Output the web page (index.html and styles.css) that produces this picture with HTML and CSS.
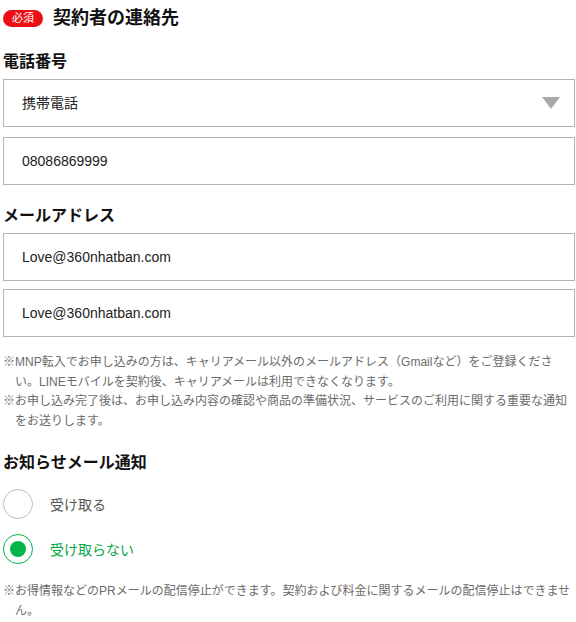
FILE: index.html
```html
<!DOCTYPE html>
<html lang="ja">
<head>
    <meta charset="UTF-8">
    <meta name="viewport" content="width=device-width, initial-scale=1.0">
    <title>契約者の連絡先</title>
    <link rel="stylesheet" href="styles.css">
</head>
<body>

    <div class="form">
        <div class="section-title">
            <span class="badge">必須</span>
            <h1>契約者の連絡先</h1>
        </div>

        <h2 class="label label-phone">電話番号</h2>
        <div class="select-wrap">
            <select class="field">
                <option>携帯電話</option>
            </select>
        </div>
        <input class="field field-gap" type="text" value="08086869999">

        <h2 class="label label-mail">メールアドレス</h2>
        <input class="field" type="text" value="Love@360nhatban.com">
        <input class="field field-gap-sm" type="text" value="Love@360nhatban.com">

        <ul class="notes">
            <li>※MNP転入でお申し込みの方は、キャリアメール以外のメールアドレス（Gmailなど）をご登録ください。LINEモバイルを契約後、キャリアメールは利用できなくなります。</li>
            <li>※お申し込み完了後は、お申し込み内容の確認や商品の準備状況、サービスのご利用に関する重要な通知をお送りします。</li>
        </ul>

        <h2 class="label label-news">お知らせメール通知</h2>
        <label class="radio">
            <input type="radio" name="news">
            <span class="circle"></span>
            <span class="radio-text">受け取る</span>
        </label>
        <label class="radio">
            <input type="radio" name="news" checked>
            <span class="circle"></span>
            <span class="radio-text">受け取らない</span>
        </label>

        <ul class="notes notes-last">
            <li>※お得情報などのPRメールの配信停止ができます。契約および料金に関するメールの配信停止はできません。</li>
        </ul>
    </div>

</body>
</html>
```

FILE: styles.css
```css
* { margin: 0; padding: 0; box-sizing: border-box; }
body {
    background: #fff; color: #111;
    font-family: "Liberation Sans", "Noto Sans CJK JP", sans-serif;
}

.form { padding: 0 1px 0 3px; }

.section-title { display: flex; align-items: center; height: 35px; padding-top: 1px; }
.badge {
    display: inline-block; width: 40px; height: 17px; line-height: 17px;
    background: #eb0f14; color: #fff; font-size: 11px; text-align: center;
    border-radius: 9px; margin-right: 10px;
}
.section-title h1 { font-size: 18px; font-weight: bold; line-height: 20px; }

.label { font-size: 16px; font-weight: bold; line-height: 20px; }
.label-phone { margin-top: 17px; margin-bottom: 7px; }
.label-mail { margin-top: 21px; margin-bottom: 7px; }
.label-news { margin-top: 22px; margin-bottom: 16px; }

.field {
    display: block; width: 100%; height: 48px;
    border: 1px solid #b4b4b4; background: #fff;
    padding: 0 18px; font-size: 14px; color: #222;
    font-family: "Liberation Sans", "Noto Sans CJK JP", sans-serif;
    outline: none; border-radius: 0;
}
.field-gap { margin-top: 10px; }
.field-gap-sm { margin-top: 8px; }

.select-wrap { position: relative; }
.select-wrap select { appearance: none; -webkit-appearance: none; }
.select-wrap::after {
    content: ""; position: absolute; right: 15px; top: 18px;
    border-left: 9px solid transparent; border-right: 9px solid transparent;
    border-top: 12px solid #a9a9a9;
}

.notes { list-style: none; margin-top: 16px; }
.notes li {
    font-size: 12px; line-height: 19.5px; color: #6b6b6b;
    padding-left: 12px; text-indent: -12px;
}
.notes-last { margin-top: 18px; }

.radio { display: flex; align-items: center; height: 30px; margin-bottom: 15px; cursor: pointer; }
.radio input { display: none; }
.circle {
    width: 30px; height: 30px; border-radius: 50%;
    border: 1px solid #bdbdbd; position: relative; margin-right: 17px;
}
.radio input:checked + .circle { border-color: #06b54a; }
.radio input:checked + .circle::after {
    content: ""; position: absolute; left: 6px; top: 6px;
    width: 16px; height: 16px; border-radius: 50%; background: #06b54a;
}
.radio-text { font-size: 14px; color: #555; }
.radio input:checked ~ .radio-text { color: #06a845; }
```
